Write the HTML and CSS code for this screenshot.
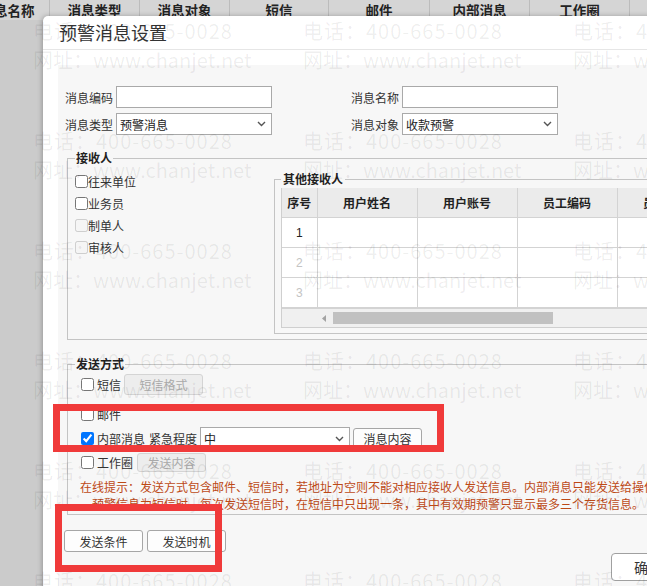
FILE: index.html
```html
<!DOCTYPE html>
<html lang="zh-CN">
<head>
    <meta charset="UTF-8">
    <title>预警消息设置</title>
    <link rel="stylesheet" href="styles.css">
</head>
<body>

    <div class="grid-head">
        <div class="col c1">消息名称</div>
        <div class="col c2">消息类型</div>
        <div class="col c3">消息对象</div>
        <div class="col c4">短信</div>
        <div class="col c5">邮件</div>
        <div class="col c6">内部消息</div>
        <div class="col c7">工作圈</div>
        <div class="col c8"></div>
    </div>

    <div class="dialog">
        <div class="dialog-title">预警消息设置</div>
        <div class="dialog-body">
            <div class="panel">

                <div class="form-grid">
                    <div class="field">
                        <label>消息编码</label>
                        <input class="text-input" type="text">
                    </div>
                    <div class="field">
                        <label>消息名称</label>
                        <input class="text-input" type="text">
                    </div>
                    <div class="field">
                        <label>消息类型</label>
                        <div class="select"><span>预警消息</span><svg width="9" height="6" viewBox="0 0 9 6"><path d="M1 1l3.5 3.5L8 1" fill="none" stroke="#555" stroke-width="1.4"/></svg></div>
                    </div>
                    <div class="field">
                        <label>消息对象</label>
                        <div class="select"><span>收款预警</span><svg width="9" height="6" viewBox="0 0 9 6"><path d="M1 1l3.5 3.5L8 1" fill="none" stroke="#555" stroke-width="1.4"/></svg></div>
                    </div>
                </div>

                <fieldset class="group receivers">
                    <legend>接收人</legend>
                    <div class="receivers-inner">
                        <div class="check-list">
                            <label class="check"><input type="checkbox">往来单位</label>
                            <label class="check"><input type="checkbox">业务员</label>
                            <label class="check"><input type="checkbox" disabled>制单人</label>
                            <label class="check"><input type="checkbox" disabled>审核人</label>
                        </div>
                        <fieldset class="group others">
                            <legend>其他接收人</legend>
                            <div class="table-wrap">
                                <table class="grid">
                                    <colgroup>
                                        <col style="width:35px">
                                        <col style="width:100px">
                                        <col style="width:100px">
                                        <col style="width:100px">
                                        <col style="width:100px">
                                    </colgroup>
                                    <tr><th>序号</th><th>用户姓名</th><th>用户账号</th><th>员工编码</th><th>员工姓名</th></tr>
                                    <tr><td class="num">1</td><td></td><td></td><td></td><td></td></tr>
                                    <tr><td class="num faint">2</td><td></td><td></td><td></td><td></td></tr>
                                    <tr><td class="num faint">3</td><td></td><td></td><td></td><td></td></tr>
                                </table>
                                <div class="hscroll">
                                    <svg class="arrow" width="5" height="7" viewBox="0 0 5 7"><path d="M4 0v7L0 3.5z" fill="#a3a3a3"/></svg>
                                    <span class="thumb"></span>
                                </div>
                            </div>
                        </fieldset>
                    </div>
                </fieldset>

                <fieldset class="group send">
                    <legend>发送方式</legend>
                    <div class="send-row">
                        <label class="check"><input type="checkbox">短信</label>
                        <button class="btn" disabled>短信格式</button>
                    </div>
                    <div class="send-row spaced">
                        <label class="check"><input type="checkbox">邮件</label>
                    </div>
                    <div class="send-row">
                        <label class="check"><input type="checkbox" checked>内部消息</label>
                        <span class="urgency">紧急程度</span>
                        <div class="select wide"><span>中</span><svg width="9" height="6" viewBox="0 0 9 6"><path d="M1 1l3.5 3.5L8 1" fill="none" stroke="#555" stroke-width="1.4"/></svg></div>
                        <button class="btn content-btn">消息内容</button>
                    </div>
                    <div class="send-row">
                        <label class="check"><input type="checkbox">工作圈</label>
                        <button class="btn small" disabled>发送内容</button>
                    </div>
                    <p class="hint">在线提示：发送方式包含邮件、短信时，若地址为空则不能对相应接收人发送信息。内部消息只能发送给操作员。<span class="hint-2">预警信息为短信时，每次发送短信时，在短信中只出现一条，其中有效期预警只显示最多三个存货信息。</span></p>
                </fieldset>

                <div class="actions">
                    <button class="btn big">发送条件</button>
                    <button class="btn big">发送时机</button>
                </div>
                <div class="dialog-foot">
                    <button class="btn ok">确定</button>
                </div>

            </div>
        </div>
    </div>

    <div class="watermark" id="watermark"></div>

    <div class="mark mark-1"></div>
    <div class="mark mark-2"></div>

    <script>
        // fill the watermark grid
        const wm = document.getElementById("watermark");
        for (let i = 0; i < 18; i++) {
            const tile = document.createElement("div");
            tile.className = "wm-tile";
            tile.innerHTML = '<div class="wm-tel">电话：400-665-0028</div><div class="wm-web">网址：www.chanjet.net</div>';
            wm.appendChild(tile);
        }
    </script>

</body>
</html>
```

FILE: styles.css
```css
html, body {
    margin: 0;
    padding: 0;
}

body {
    width: 647px;
    height: 586px;
    overflow: hidden;
    position: relative;
    background-color: #cbcbcb;
    font-family: "Noto Sans CJK SC", "Liberation Sans", sans-serif;
    font-size: 12px;
    color: #333;
}

/* grid header behind the dialog */
.grid-head {
    display: flex;
    height: 20px;
    margin-left: -34px;
    background-color: #d5d5d5;
}

.grid-head .col {
    flex: none;
    box-sizing: border-box;
    border-right: 1px solid #bcbcbc;
    text-align: center;
    font-weight: bold;
    font-size: 13.5px;
    line-height: 20px;
    color: #222;
    white-space: nowrap;
    overflow: hidden;
}

.c1 { width: 84px; }
.c2 { width: 90px; }
.c3 { width: 90px; }
.c4 { width: 99px; }
.c5 { width: 101px; }
.c6 { width: 100px; }
.c7 { width: 100px; }
.c8 { width: 100px; }

/* dialog */
.dialog {
    position: absolute;
    left: 43px;
    top: 16px;
    width: 720px;
    height: 600px;
    background-color: #fff;
    border-radius: 5px 0 0 0;
    box-shadow: -1px 0 5px rgba(0, 0, 0, 0.25);
}

.dialog-title {
    height: 34px;
    box-sizing: border-box;
    padding-left: 16px;
    border-bottom: 1px solid #e6e6e6;
    font-size: 18px;
    line-height: 33px;
    color: #333;
}

.dialog-body {
    padding: 15px 0 0 15px;
}

.panel {
    height: 560px;
    padding-top: 21px;
    box-sizing: border-box;
    background-color: #f7f7f7;
}

/* top form */
.form-grid {
    display: grid;
    grid-template-columns: 286px 286px;
    row-gap: 5px;
    margin-left: 7px;
}

.field {
    display: flex;
    align-items: center;
    height: 22px;
}

.field label {
    width: 48px;
    margin-right: 3px;
    white-space: nowrap;
}

.text-input,
.select {
    box-sizing: border-box;
    width: 156px;
    height: 22px;
    margin: 0;
    border: 1px solid #a9a9a9;
    background-color: #fff;
    font-family: inherit;
    font-size: 12px;
}

.select {
    display: flex;
    align-items: center;
    justify-content: space-between;
    padding: 0 5px 0 3px;
    color: #222;
}

.select.wide {
    width: 150px;
    height: 23px;
}

/* fieldsets */
.group {
    margin: 0 0 0 9px;
    padding: 0 0 5px 7px;
    border: 1px solid #c4c4c4;
    min-width: 0;
}

.group legend {
    padding: 0 1px;
    font-weight: bold;
    line-height: 16px;
    color: #222;
}

.receivers {
    margin-top: 15px;
    width: 680px;
    box-sizing: border-box;
}

.receivers-inner {
    display: flex;
    align-items: flex-start;
    padding-top: 4px;
}

.check-list {
    flex: none;
    width: 199px;
    display: flex;
    flex-direction: column;
}

.check {
    display: flex;
    align-items: center;
    height: 22px;
    white-space: nowrap;
}

.check input {
    width: 13px;
    height: 13px;
    margin: 0;
}

.others {
    flex: none;
    width: 430px;
    margin: 1px 0 0 0;
    padding: 1px 0 5px 6px;
}

.others legend {
    padding: 0 2px;
}

.table-wrap {
    border-left: 1px solid #cfcfcf;
    border-bottom: 1px solid #cfcfcf;
}

.grid {
    border-collapse: collapse;
    table-layout: fixed;
    width: 435px;
}

.grid th,
.grid td {
    height: 29px;
    padding: 0;
    border: 1px solid #d3d3d3;
    text-align: center;
    white-space: nowrap;
}

.grid tr:first-child th {
    border-top: 0;
}

.grid th:first-child,
.grid td:first-child {
    border-left: 0;
}

.grid th {
    background-color: #ebebeb;
    font-weight: bold;
    color: #222;
}

.grid td {
    background-color: #fff;
}

.grid .num {
    font-family: "Liberation Sans", sans-serif;
    color: #222;
}

.grid .faint {
    color: #c4c4c4;
}

.hscroll {
    display: flex;
    align-items: center;
    height: 19px;
    background-color: #f0f0f0;
    border-top: 1px solid #d3d3d3;
    box-sizing: border-box;
}

.hscroll .arrow {
    margin-left: 40px;
}

.hscroll .thumb {
    width: 220px;
    height: 12px;
    margin-left: 6px;
    background-color: #c1c1c1;
}

/* send options */
.send {
    margin-top: 16px;
    width: 680px;
    box-sizing: border-box;
    padding-bottom: 2px;
}

.send-row {
    display: flex;
    align-items: center;
    height: 23px;
    margin-top: 1px;
    padding-left: 6px;
}

.send-row.spaced {
    margin-top: 7px;
}

.send-row .check input {
    margin-right: 3px;
}

.urgency {
    margin: 0 3px 0 4px;
    white-space: nowrap;
}

.btn {
    box-sizing: border-box;
    height: 21px;
    padding: 0;
    border: 1px solid #a6a6a6;
    border-radius: 3px;
    background-color: #fdfdfd;
    font-family: inherit;
    font-size: 12px;
    color: #333;
}

.btn:disabled {
    background-color: #ededed;
    border-color: #d4d4d4;
    color: #a9a9a9;
}

.send-row .btn {
    width: 79px;
    margin-left: 3px;
}

.send-row .btn.content-btn {
    width: 69px;
    height: 22px;
}

.send-row .btn.small {
    width: 69px;
    height: 19px;
    margin-left: 4px;
}

.hint {
    margin: 4px 0 0 5px;
    line-height: 17px;
    color: #bd4a17;
    white-space: nowrap;
}

.hint-2 {
    display: block;
    padding-left: 12px;
}

/* bottom buttons */
.actions {
    display: flex;
    gap: 4px;
    margin: 15px 0 0 6px;
}

.btn.big {
    width: 79px;
    height: 22px;
}

.dialog-foot {
    padding-left: 553px;
    margin-top: 1px;
}

.btn.ok {
    width: 74px;
    height: 28px;
    border-color: #a0a0a0;
    border-radius: 4px;
    background-color: #fff;
    font-size: 14px;
}

/* watermark over everything */
.watermark {
    position: absolute;
    top: 0;
    left: 0;
    width: 900px;
    height: 700px;
    display: grid;
    grid-template-columns: repeat(3, 270px);
    grid-auto-rows: 110px;
    padding: 16px 0 0 33px;
    pointer-events: none;
    color: rgba(0, 0, 0, 0.07);
    font-size: 20px;
    line-height: 29px;
    white-space: nowrap;
}

.wm-tel {
    letter-spacing: 1px;
}

/* red annotation boxes */
.mark {
    position: absolute;
    box-sizing: border-box;
    border: 7px solid #f03a3a;
}

.mark-1 {
    left: 53px;
    top: 404px;
    width: 391px;
    height: 48px;
}

.mark-2 {
    left: 55px;
    top: 504px;
    width: 167px;
    height: 68px;
}
```
